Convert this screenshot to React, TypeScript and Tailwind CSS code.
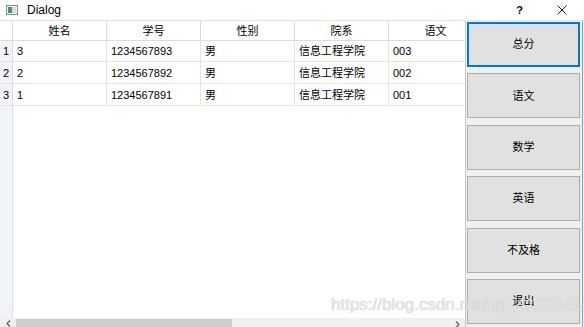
import React from "react";

const cols = ["姓名", "学号", "性别", "院系", "语文"];
const rows = [
  ["3", "1234567893", "男", "信息工程学院", "003"],
  ["2", "1234567892", "男", "信息工程学院", "002"],
  ["1", "1234567891", "男", "信息工程学院", "001"],
];
const buttons = ["总分", "语文", "数学", "英语", "不及格", "退出"];
const font = { fontFamily: '"Liberation Sans", "Noto Sans CJK SC", sans-serif' };

export default function App() {
  return (
    <div
      className="relative w-[584px] h-[327px] overflow-hidden bg-white text-black flex flex-col"
      style={font}
    >
      {/* Title bar */}
      <div className="h-[21px] flex items-center border-b border-[#e3e3e3] bg-white shrink-0">
        <svg width="12" height="10" viewBox="0 0 12 10" className="ml-[6px]">
          <rect x="0.5" y="0.5" width="11" height="9" fill="#f4f4f4" stroke="#8a8a8a" />
          <rect x="2" y="2" width="4" height="6" fill="#4d8a8c" />
          <rect x="6" y="2" width="4" height="6" fill="#d8dde2" />
        </svg>
        <span className="ml-[9px] text-[12px] leading-none">Dialog</span>
        <div className="flex-1" />
        <span className="text-[11px] font-semibold leading-none mr-[34px]">?</span>
        <svg width="10" height="10" viewBox="0 0 10 10" className="mr-[17px]">
          <path d="M0.5 0.5 L9.5 9.5 M9.5 0.5 L0.5 9.5" stroke="#222" strokeWidth="1" />
        </svg>
      </div>

      <div className="flex flex-1 min-h-0">
        {/* Table area */}
        <div className="w-[466px] flex flex-col border-r border-[#c8c8c8] shrink-0">
          <div className="flex flex-1 min-h-0 overflow-hidden">
            {/* vertical header */}
            <div className="w-[13px] shrink-0 bg-[#f1f4f8] border-r border-[#dcdcdc] flex flex-col">
              <div className="h-[20px] bg-white border-b border-[#dcdcdc]" />
              {rows.map((_, i) => (
                <div
                  key={i}
                  className={`${i === 0 ? "h-[21px]" : "h-[22px]"} border-b border-[#e4e4e4] flex items-center pl-[3px] pt-[1px] text-[11px]`}
                >
                  {i + 1}
                </div>
              ))}
            </div>
            <div className="flex-1 overflow-hidden">
              <div className="w-[600px]">
                <div className="h-[20px] flex border-b border-[#dcdcdc]">
                  {cols.map((c) => (
                    <div
                      key={c}
                      className="w-[94px] shrink-0 border-r border-[#dcdcdc] flex items-center justify-center pt-[1px] text-[11px]"
                    >
                      {c}
                    </div>
                  ))}
                </div>
                {rows.map((r, i) => (
                  <div
                    key={i}
                    className={`${i === 0 ? "h-[21px]" : "h-[22px]"} flex border-b border-[#e4e4e4]`}
                  >
                    {r.map((v, j) => (
                      <div
                        key={j}
                        className="w-[94px] shrink-0 border-r border-[#e4e4e4] flex items-center pl-[4px] pt-[1px] text-[11px]"
                      >
                        {v}
                      </div>
                    ))}
                  </div>
                ))}
              </div>
            </div>
          </div>
          {/* horizontal scrollbar */}
          <div className="h-[9px] bg-[#f0f0f0] flex items-start shrink-0">
            <div className="w-[16px] flex justify-center pt-[2px]">
              <svg width="5" height="7" viewBox="0 0 5 7">
                <path d="M4 0.5 L1 3.5 L4 6.5" stroke="#606060" strokeWidth="1.2" fill="none" />
              </svg>
            </div>
            <div className="w-[216px] h-[9px] mt-[1px] bg-[#cdcdcd]" />
            <div className="flex-1" />
            <div className="w-[16px] flex justify-center pt-[3px]">
              <svg width="5" height="7" viewBox="0 0 5 7">
                <path d="M1 0.5 L4 3.5 L1 6.5" stroke="#606060" strokeWidth="1.2" fill="none" />
              </svg>
            </div>
          </div>
        </div>

        {/* Button panel */}
        <div className="flex-1 bg-[#f0f0f0] flex">
          <div className="w-[113px] ml-[1px] flex flex-col gap-[6.4px] pt-[1px]">
            {buttons.map((b, i) => (
              <div
                key={b}
                className={`h-[45px] shrink-0 bg-[#e1e1e1] flex items-center justify-center text-[11px] ${
                  i === 0 ? "border-2 border-[#0078d7]" : "border border-[#adadad]"
                }`}
              >
                {b}
              </div>
            ))}
          </div>
          <div className="w-[2px]" />
          <div className="w-[1px] bg-[#6fa8dc]" />
        </div>
      </div>

      {/* watermark */}
      <div
        className="absolute left-[331px] top-[296px] text-[17px] leading-none text-[#e6e6e6] pointer-events-none whitespace-nowrap"
        style={{ textShadow: "0 0 1px rgba(120,120,120,0.45)" }}
      >
        https://blog.csdn.net/qq_41221411
      </div>
    </div>
  );
}
